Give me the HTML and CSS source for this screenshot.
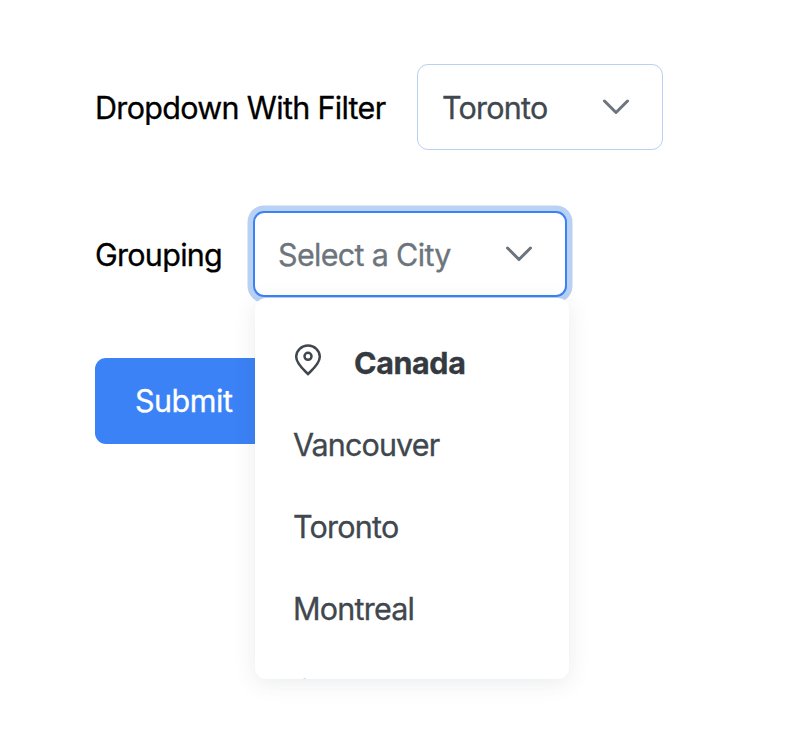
FILE: index.html
```html
<!DOCTYPE html>
<html lang="en">
<head>
<meta charset="utf-8">
<title>Dropdown</title>
<link rel="stylesheet" href="styles.css">
</head>
<body>
<form class="form">
  <div class="field">
    <span class="label label-filter">Dropdown With Filter</span>
    <div class="select select-filter">
      <span class="value city">Toronto</span>
      <svg class="chevron" viewBox="0 0 28 16"><path d="M2.5 2 14 13.5 25.5 2"/></svg>
    </div>
  </div>
  <div class="field">
    <span class="label label-group">Grouping</span>
    <div class="select select-group">
      <span class="value placeholder">Select a City</span>
      <svg class="chevron" viewBox="0 0 28 16"><path d="M2.5 2 14 13.5 25.5 2"/></svg>
      <div class="panel">
        <div class="item group">
          <svg class="pin" viewBox="0 0 28 32"><path d="M14 30C10.5 26.5 2.2 20 2.2 12.8a11.8 11.3 0 0 1 23.6 0C25.8 20 17.5 26.5 14 30Z"/><circle cx="14" cy="12.3" r="3.5"/></svg>
          <span class="canada">Canada</span>
        </div>
        <div class="item"><span class="vancouver">Vancouver</span></div>
        <div class="item"><span class="city">Toronto</span></div>
        <div class="item"><span class="montreal">Montreal</span></div>
        <div class="item"><span>Ottawa</span></div>
      </div>
    </div>
  </div>
  <button class="submit" type="button">Submit</button>
</form>
</body>
</html>
```
FILE: styles.css
```css
* { box-sizing: border-box; }
body {
  margin: 0;
  height: 745px;
  overflow: hidden;
  background: #fff;
  font-family: Inter, sans-serif;
  font-size: 30.5px;
  line-height: 40px;
  color: #000;
  -webkit-text-stroke: 0.3px currentColor;
}
.form {
  display: flex;
  flex-direction: column;
  align-items: flex-start;
  gap: 61px;
  padding: 64px 0 0 95px;
}
.field { display: flex; align-items: center; height: 86px; }
.label, .value, .item span { white-space: nowrap; }
.label { padding-top: 1px; }
.label-filter { width: 322px; letter-spacing: -0.68px; }
.label-group { width: 158px; letter-spacing: -0.72px; }
.select {
  position: relative;
  display: flex;
  align-items: center;
  justify-content: space-between;
  height: 86px;
  padding: 0 32px 0 24px;
  border: 1px solid #b9d1f2;
  border-radius: 11px;
  background: #fff;
  color: #40474e;
}
.value { padding-top: 1px; }
.select-filter { width: 246px; }
.select-group {
  width: 314px;
  border: 2px solid #3b82f6;
  box-shadow: 0 0 0 5.5px #b9d1f2;
  padding: 0 32px 0 23px;
}
.placeholder { color: #6c757d; letter-spacing: -0.68px; }
.city { letter-spacing: -0.78px; }
.vancouver { letter-spacing: -0.88px; }
.montreal { letter-spacing: -0.78px; }
.canada { letter-spacing: -0.4px; }
.chevron {
  width: 28px;
  height: 16px;
  fill: none;
  stroke: #6c757d;
  stroke-width: 3;
  stroke-linecap: round;
  stroke-linejoin: round;
}
.panel {
  position: absolute;
  z-index: 1;
  top: 85px;
  left: 0;
  width: 314px;
  height: 381px;
  padding-top: 24px;
  overflow: hidden;
  border-radius: 11px;
  background: #fff;
  box-shadow: 0 4px 22px rgba(50, 60, 75, 0.1);
}
.item { display: flex; align-items: center; height: 82px; padding-left: 38px; }
.group { font-weight: 700; color: #343a40; }
.pin {
  width: 28px;
  height: 32px;
  margin: -7px 32px 0 1px;
  fill: none;
  stroke: #40474e;
  stroke-width: 2.5;
}
.submit {
  width: 216px;
  height: 86px;
  padding: 0 0 0 40px;
  border: 0;
  border-radius: 11px;
  background: #3b82f6;
  color: #fff;
  font: inherit;
  letter-spacing: -0.5px;
  text-align: left;
}
```
